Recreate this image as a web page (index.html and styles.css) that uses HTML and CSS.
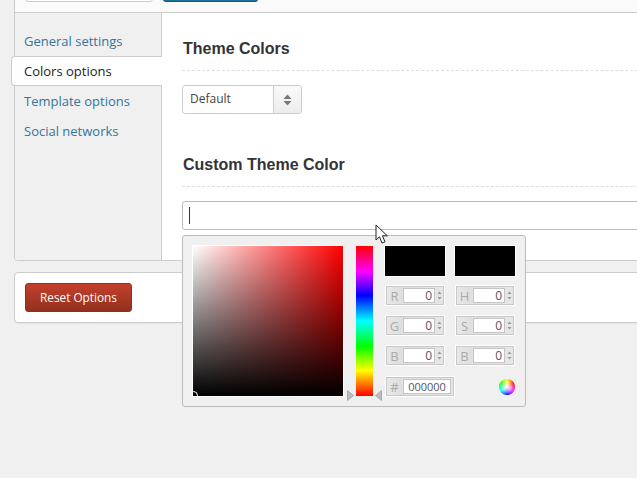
FILE: index.html
```html
<!DOCTYPE html>
<html lang="en">
<head>
<meta charset="utf-8">
<title>Colors options</title>
<link rel="stylesheet" href="styles.css">
</head>
<body>
<div class="page">
  <section class="panel">
    <header class="topbar">
      <span class="top-btn top-btn-plain"></span>
      <span class="top-btn top-btn-blue"></span>
    </header>
    <div class="panel-body">
      <nav class="sidebar">
        <a class="nav-item">General settings</a>
        <a class="nav-item nav-active">Colors options</a>
        <a class="nav-item">Template options</a>
        <a class="nav-item">Social networks</a>
      </nav>
      <main class="content">
        <h2 class="heading">Theme Colors</h2>
        <div class="select">
          <span class="select-value">Default</span>
          <span class="select-arrows">
            <svg width="9" height="12" viewBox="0 0 9 12"><path d="M4.5 0.5 L8.5 5 H0.5 Z M0.5 7 H8.5 L4.5 11.5 Z" fill="#777"/></svg>
          </span>
        </div>
        <h2 class="heading heading-second">Custom Theme Color</h2>
        <div class="text-input"><span class="caret"></span></div>
      </main>
    </div>
  </section>
  <section class="footer-card">
    <button class="reset-btn">Reset Options</button>
  </section>

  <div class="picker">
    <div class="sat"><div class="sat-dark"></div><span class="sat-handle"></span></div>
    <svg class="arrow" width="7" height="11" viewBox="0 0 7 11"><path d="M0.5 0.5 L6.5 5.5 L0.5 10.5 Z" fill="#bbb" stroke="#aaa"/></svg>
    <div class="hue"></div>
    <svg class="arrow arrow-right" width="7" height="11" viewBox="0 0 7 11"><path d="M6.5 0.5 L0.5 5.5 L6.5 10.5 Z" fill="#bbb" stroke="#aaa"/></svg>
    <div class="controls">
      <span class="swatch"></span><span class="swatch"></span>
      <div class="field"><span class="field-label">R</span><span class="field-value">0</span><svg class="spin" width="5" height="9" viewBox="0 0 5 9"><path d="M2.5 0.5 L4.5 3 H0.5 Z M0.5 6 H4.5 L2.5 8.5 Z" fill="#999"/></svg></div>
      <div class="field"><span class="field-label">H</span><span class="field-value">0</span><svg class="spin" width="5" height="9" viewBox="0 0 5 9"><path d="M2.5 0.5 L4.5 3 H0.5 Z M0.5 6 H4.5 L2.5 8.5 Z" fill="#999"/></svg></div>
      <div class="field"><span class="field-label">G</span><span class="field-value">0</span><svg class="spin" width="5" height="9" viewBox="0 0 5 9"><path d="M2.5 0.5 L4.5 3 H0.5 Z M0.5 6 H4.5 L2.5 8.5 Z" fill="#999"/></svg></div>
      <div class="field"><span class="field-label">S</span><span class="field-value">0</span><svg class="spin" width="5" height="9" viewBox="0 0 5 9"><path d="M2.5 0.5 L4.5 3 H0.5 Z M0.5 6 H4.5 L2.5 8.5 Z" fill="#999"/></svg></div>
      <div class="field"><span class="field-label">B</span><span class="field-value">0</span><svg class="spin" width="5" height="9" viewBox="0 0 5 9"><path d="M2.5 0.5 L4.5 3 H0.5 Z M0.5 6 H4.5 L2.5 8.5 Z" fill="#999"/></svg></div>
      <div class="field"><span class="field-label">B</span><span class="field-value">0</span><svg class="spin" width="5" height="9" viewBox="0 0 5 9"><path d="M2.5 0.5 L4.5 3 H0.5 Z M0.5 6 H4.5 L2.5 8.5 Z" fill="#999"/></svg></div>
      <div class="field field-hex"><span class="field-label">#</span><span class="field-value hex-value">000000</span></div>
      <span class="wheel"></span>
    </div>
  </div>

  <svg class="cursor" width="14" height="21" viewBox="0 0 14 21"><path d="M1 1 V16 L4.5 12.8 L7 19 L10 17.8 L7.4 11.8 H12.3 Z" fill="#fff" stroke="#222" stroke-width="1"/></svg>
</div>
</body>
</html>
```

FILE: styles.css
```css
* { box-sizing: border-box; }
html, body { margin: 0; height: 100%; overflow: hidden; background: #f0f0f0; }
body { font-family: "Open Sans", "Liberation Sans", sans-serif; }
.page { position: relative; width: 637px; height: 478px; overflow: hidden; padding-left: 14px; }

.panel {
  width: 720px;
  height: 291px;
  margin-top: -30px;
  border: 1px solid #ccc;
  border-radius: 4px;
  background: #fff;
  display: flex;
  flex-direction: column;
}
.topbar {
  height: 42px;
  flex: none;
  background: #fafafa;
  border-bottom: 1px solid #ccc;
  border-radius: 4px 4px 0 0;
  display: flex;
  align-items: flex-end;
  gap: 10px;
  padding: 0 0 10px 10px;
}
.top-btn { display: block; height: 24px; border-radius: 0 0 3px 3px; }
.top-btn-plain { width: 128px; background: #fff; border: 1px solid #ccc; }
.top-btn-blue { width: 95px; background: #1f6f97; border-bottom: 1px solid #175a7b; }

.panel-body { flex: 1; display: flex; min-height: 0; }
.sidebar {
  width: 147px;
  flex: none;
  background: #f0f0f0;
  border-right: 1px solid #ccc;
  border-radius: 0 0 0 4px;
  padding-top: 13px;
  display: flex;
  flex-direction: column;
}
.nav-item {
  height: 30px;
  padding-left: 9px;
  font-size: 13px;
  line-height: 30px;
  color: #33759b;
}
.nav-active {
  margin: 0 -1px 0 -4px;
  padding-left: 12px;
  line-height: 28px;
  color: #222;
  background: #fff;
  border: 1px solid #ccc;
  border-right: 0;
  border-radius: 4px 0 0 4px;
}

.content { flex: 1; padding: 0 0 0 20px; background: #fff; }
.heading {
  margin: 0;
  height: 20px;
  padding: 26px 0 11px 1px;
  box-sizing: content-box;
  font-family: "Liberation Sans", Arial, sans-serif;
  font-size: 16px;
  line-height: 20px;
  font-weight: 700;
  color: #333;
  border-bottom: 1px dashed #ddd;
}
.heading-second { padding-top: 41px; }
.select {
  width: 120px;
  height: 29px;
  margin-top: 14px;
  border: 1px solid #ccc;
  border-radius: 3px;
  background: #fff;
  display: flex;
}
.select-value {
  flex: 1;
  padding-left: 7px;
  font-size: 12px;
  line-height: 25px;
  color: #444;
}
.select-arrows {
  width: 28px;
  border-left: 1px solid #ccc;
  background: linear-gradient(#fafafa, #ececec);
  border-radius: 0 3px 3px 0;
  display: flex;
  align-items: center;
  justify-content: center;
}
.text-input {
  width: 520px;
  height: 29px;
  margin-top: 14px;
  border: 1px solid #bbb;
  border-radius: 3px;
  background: #fff;
  padding: 5px 0 0 6px;
}
.caret { display: block; width: 1px; height: 17px; background: #333; }

.footer-card {
  width: 720px;
  height: 51px;
  margin-top: 11px;
  border: 1px solid #ccc;
  border-radius: 4px;
  background: #fff;
  padding: 10px;
  box-shadow: 0 1px 1px #e6e6e6;
}
.reset-btn {
  display: block;
  width: 107px;
  height: 29px;
  padding: 0;
  border: 1px solid #8f2f1e;
  border-radius: 3px;
  background: linear-gradient(#c4402b, #92301f);
  color: #fff;
  font-family: "Open Sans", "Liberation Sans", sans-serif;
  font-size: 11.8px;
  line-height: 27px;
  text-align: center;
}

.picker {
  position: absolute;
  left: 182px;
  top: 235px;
  width: 344px;
  height: 172px;
  background: #f0f0f0;
  border: 1px solid #bbb;
  border-radius: 3px;
  padding: 10px;
  display: flex;
  align-items: flex-start;
}
.sat {
  position: relative;
  width: 150px;
  height: 150px;
  flex: none;
  background: linear-gradient(to right, #fff, #f00);
  box-shadow: 0 0 0 1px #fff;
}
.sat-dark { width: 100%; height: 100%; background: linear-gradient(to bottom, rgba(0,0,0,0), #000); }
.sat-handle {
  position: absolute;
  left: -4px;
  bottom: -4px;
  width: 9px;
  height: 9px;
  border: 1px solid #fff;
  border-radius: 50%;
  clip-path: inset(0 0 4px 4px);
}
.arrow { flex: none; margin: 144px 0 0 4px; }
.hue {
  width: 17px;
  height: 150px;
  flex: none;
  margin-left: 2px;
  background: linear-gradient(to bottom, #f00 0%, #f0f 17%, #00f 33%, #0ff 50%, #0f0 67%, #ff0 83%, #f00 100%);
}
.arrow-right { margin-left: 2px; }
.controls {
  flex: none;
  margin-left: 3px;
  width: 130px;
  display: grid;
  grid-template-columns: 60px 60px;
  grid-template-rows: 30px 21px 21px 21px 21px;
  column-gap: 10px;
  row-gap: 9px;
}
.swatch {
  display: block;
  background: #000;
  box-shadow: 0 0 0 1px #fff;
}
.field {
  display: flex;
  align-items: center;
  height: 21px;
  background: linear-gradient(to right, #e8e8e8, #dfdfdf 16px, #e2e2e2 16px, #e6e6e6);
  border: 1px solid #fff;
  box-shadow: inset 0 0 0 1px #c8c8c8;
}
.field-label {
  width: 17px;
  flex: none;
  text-align: center;
  font-size: 13px;
  color: #aaa;
}
.field-value {
  width: 32px;
  height: 15px;
  flex: none;
  background: #fff;
  border: 1px solid #c4c4c4;
  font-size: 12px;
  line-height: 13px;
  text-align: right;
  padding-right: 2px;
  color: #556;
}
.spin { flex: none; margin-left: 2px; }
.field-hex { width: 70px; margin-top: 1px; }
.hex-value {
  width: 48px;
  font-size: 11px;
  text-align: center;
  padding: 0;
}
.wheel {
  display: block;
  width: 16px;
  height: 16px;
  margin: 4px 0 0 44px;
  border-radius: 50%;
  background:
    radial-gradient(circle, #fff 0%, rgba(255,255,255,0.6) 35%, rgba(255,255,255,0) 72%),
    conic-gradient(#ff0, #f00 60deg, #f0f 120deg, #00f 180deg, #0ff 240deg, #0f0 300deg, #ff0);
}

.cursor { position: absolute; left: 375px; top: 224px; }
```
